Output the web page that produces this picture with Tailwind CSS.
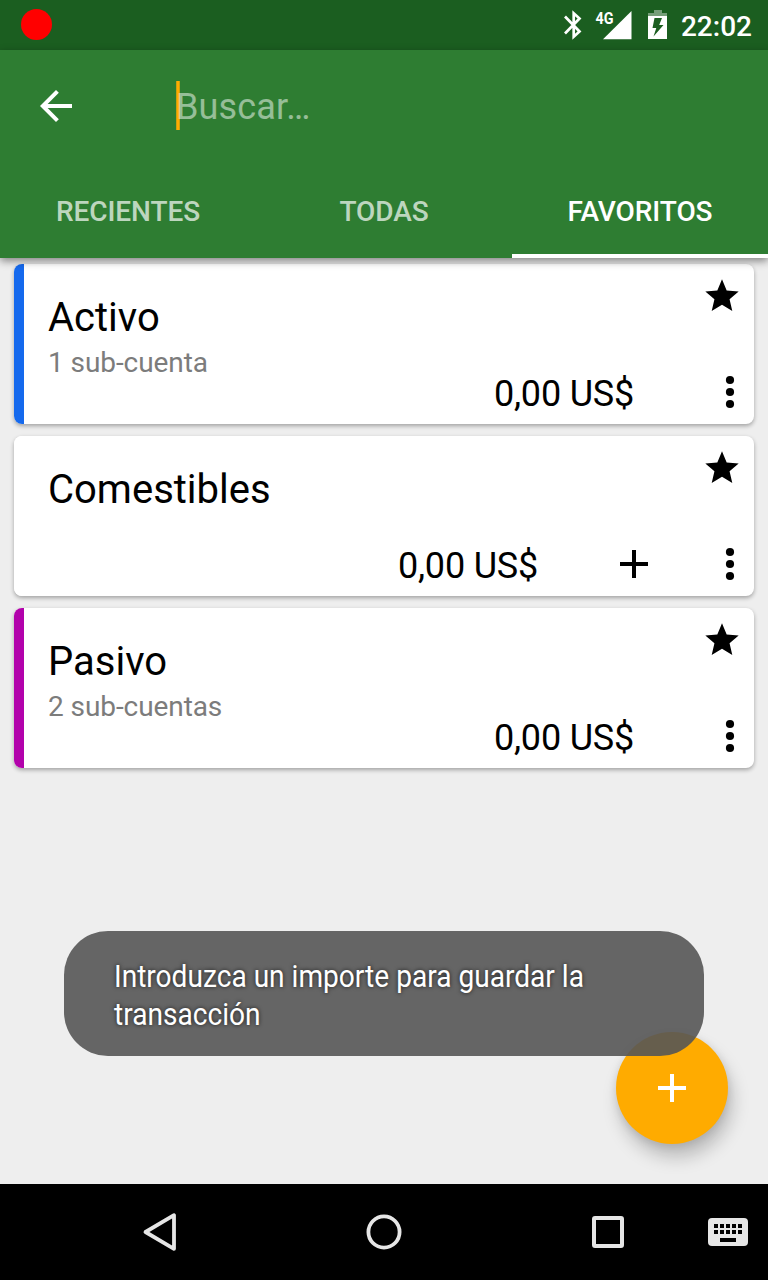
<!DOCTYPE html>
<html lang="es">
<head>
<meta charset="utf-8">
<title>Cuentas</title>
<script src="https://cdn.jsdelivr.net/npm/@tailwindcss/browser@4"></script>
</head>
<body class="w-[768px] h-[1280px] overflow-hidden bg-[#eeeeee] font-['Roboto',sans-serif] text-black">
<svg class="hidden">
  <symbol id="star" viewBox="0 0 24 24"><path d="M12 17.27L18.18 21l-1.64-7.03L22 9.24l-7.19-.61L12 2 9.19 8.63 2 9.24l5.46 4.73L5.82 21z"/></symbol>
  <symbol id="more" viewBox="0 0 24 24"><circle cx="12" cy="6" r="2.05"/><circle cx="12" cy="12" r="2.05"/><circle cx="12" cy="18" r="2.05"/></symbol>
  <symbol id="plus" viewBox="0 0 24 24"><path d="M19 13h-6v6h-2v-6H5v-2h6V5h2v6h6v2z"/></symbol>
</svg>
<div class="relative flex h-full flex-col">
  <div class="flex h-[50px] shrink-0 items-center bg-[#1b5e20] pl-[21px] pr-4 text-white">
    <div class="relative -top-[0.5px] size-[31px] rounded-full bg-[#ff0000]"></div>
    <svg class="ml-auto h-[50px] w-[22px]" viewBox="0 0 22 50" fill="none" stroke="#fff" stroke-width="2.700"><path d="M3 16.500L17.500 31.500l-5.800 5.200V13.300l5.800 5.200L3 33.500"/></svg>
    <svg class="ml-[10px] h-[50px] w-[38px]" viewBox="0 0 38 50" fill="#fff"><path d="M37.500 11v28.300H9z"/><text x="1.500" y="23.500" font-size="17" font-weight="700" textLength="18" lengthAdjust="spacingAndGlyphs">4G</text></svg>
    <svg class="ml-4 h-[50px] w-[20px]" viewBox="0 0 20 50"><path d="M6 10h8v3h5v3H0v-3h6z" fill="#fff" opacity=".4"/><path fill="#fff" fill-rule="evenodd" d="M0 16h19v23H0zM6.500 18L4.500 28h3.800L5.500 36.500 15.500 25h-4.300L14 18z"/></svg>
    <span class="ml-[13px] text-[28px] font-medium leading-[50px] pt-[3px]">22:02</span>
  </div>
  <header class="relative z-10 flex h-[208px] shrink-0 flex-col bg-[#2e7d32] shadow-[0_3px_8px_rgba(0,0,0,0.45)]">
    <div class="flex h-28 items-center pl-8">
      <svg class="size-12" viewBox="0 0 24 24" fill="#fff"><path d="M20 11H7.830l5.590-5.590L12 4l-8 8 8 8 1.410-1.410L7.830 13H20v-2z"/></svg>
      <div class="relative ml-24 text-[36px] leading-[48px] text-white/50"><span class="absolute -top-[1px] left-0 h-[49px] w-1 border-x border-[#cca010] bg-[#ffab00]"></span><span class="relative top-[1px] tracking-[0.15px]">Buscar…</span></div>
    </div>
    <nav class="grid h-24 grid-cols-3 text-center text-[28px] font-medium leading-[76px] tracking-[-0.08px] text-white/70">
      <div class="pt-3">RECIENTES</div><div class="pt-3">TODAS</div><div class="border-b-4 border-white pt-3 text-white">FAVORITOS</div>
    </nav>
  </header>
  <main class="flex flex-1 flex-col gap-3 px-[14px] pt-[6px]">
    <section class="flex h-40 overflow-hidden rounded-lg bg-white shadow-[0_2px_4px_rgba(0,0,0,0.32)]">
      <div class="w-[10px] bg-[#1569ed]"></div>
      <div class="flex flex-1 flex-col pl-6">
        <div class="flex h-[104px] justify-between pr-3">
          <div class="pt-[30px]"><h2 class="text-[40px] leading-[48px]">Activo</h2><p class="mt-[5px] text-[28px] leading-8 tracking-[-0.08px] text-[#7c7c7c]">1 sub-cuenta</p></div>
          <svg class="mt-3 size-10"><use href="#star"/></svg>
        </div>
        <div class="flex h-12 items-center justify-end"><span class="mr-[72px] pt-[3px] text-[36px] leading-[48px] tracking-[-0.2px]">0,00 US$</span><svg class="size-12"><use href="#more"/></svg></div>
      </div>
    </section>
    <section class="flex h-40 overflow-hidden rounded-lg bg-white shadow-[0_2px_4px_rgba(0,0,0,0.32)]">
      <div class="w-[10px] bg-white"></div>
      <div class="flex flex-1 flex-col pl-6">
        <div class="flex h-[104px] justify-between pr-3">
          <div class="pt-[30px]"><h2 class="text-[40px] leading-[48px]">Comestibles</h2></div>
          <svg class="mt-3 size-10"><use href="#star"/></svg>
        </div>
        <div class="flex h-12 items-center justify-end"><span class="mr-[72px] pt-[3px] text-[36px] leading-[48px] tracking-[-0.2px]">0,00 US$</span><svg class="mr-12 size-12"><use href="#plus"/></svg><svg class="size-12"><use href="#more"/></svg></div>
      </div>
    </section>
    <section class="flex h-40 overflow-hidden rounded-lg bg-white shadow-[0_2px_4px_rgba(0,0,0,0.32)]">
      <div class="w-[10px] bg-[#b202ab]"></div>
      <div class="flex flex-1 flex-col pl-6">
        <div class="flex h-[104px] justify-between pr-3">
          <div class="pt-[30px]"><h2 class="text-[40px] leading-[48px]">Pasivo</h2><p class="mt-[5px] text-[28px] leading-8 tracking-[-0.08px] text-[#7c7c7c]">2 sub-cuentas</p></div>
          <svg class="mt-3 size-10"><use href="#star"/></svg>
        </div>
        <div class="flex h-12 items-center justify-end"><span class="mr-[72px] pt-[3px] text-[36px] leading-[48px] tracking-[-0.2px]">0,00 US$</span><svg class="size-12"><use href="#more"/></svg></div>
      </div>
    </section>
  </main>
  <button class="absolute bottom-[136px] right-10 flex size-28 items-center justify-center rounded-full bg-[#ffab00] shadow-[4px_13px_18px_rgba(0,0,0,0.22),0_2px_8px_rgba(0,0,0,0.1)]"><svg class="size-12 fill-white"><use href="#plus"/></svg></button>
  <div class="absolute left-16 top-[931px] h-[125px] w-[640px] rounded-[44px] bg-[#555]/90 pl-[50px] pt-[26px] text-[32px] leading-[38px] text-white [text-shadow:0_0_5px_rgba(0,0,0,0.75)]">
    <p class="w-max origin-left scale-x-[0.878] whitespace-nowrap">Introduzca un importe para guardar la<br>transacción</p>
  </div>
  <footer class="relative z-10 flex h-24 shrink-0 items-center bg-black">
    <svg class="ml-[136px] size-12" viewBox="0 0 48 48" fill="none" stroke="#e6e6e6" stroke-width="3.800" stroke-linejoin="round"><path d="M38 7.200v33.600L9.500 24z"/></svg>
    <svg class="ml-44 size-12" viewBox="0 0 48 48" fill="none" stroke="#e6e6e6" stroke-width="3.800"><circle cx="24" cy="24" r="15.600"/></svg>
    <svg class="ml-44 size-12" viewBox="0 0 48 48" fill="none" stroke="#e6e6e6" stroke-width="4"><rect x="10" y="10" width="28" height="28" rx="1"/></svg>
    <svg class="ml-[72px] size-12" viewBox="0 0 48 48"><rect x="4" y="10" width="40" height="28" rx="4" fill="#e6e6e6"/><path d="M10 16h4v4h-4zm6 0h4v4h-4zm6 0h4v4h-4zm6 0h4v4h-4zm6 0h4v4h-4zM10 22h4v4h-4zm6 0h4v4h-4zm6 0h4v4h-4zm6 0h4v4h-4zm6 0h4v4h-4zM16 30h16v4H16z"/></svg>
  </footer>
</div>
</body>
</html>
